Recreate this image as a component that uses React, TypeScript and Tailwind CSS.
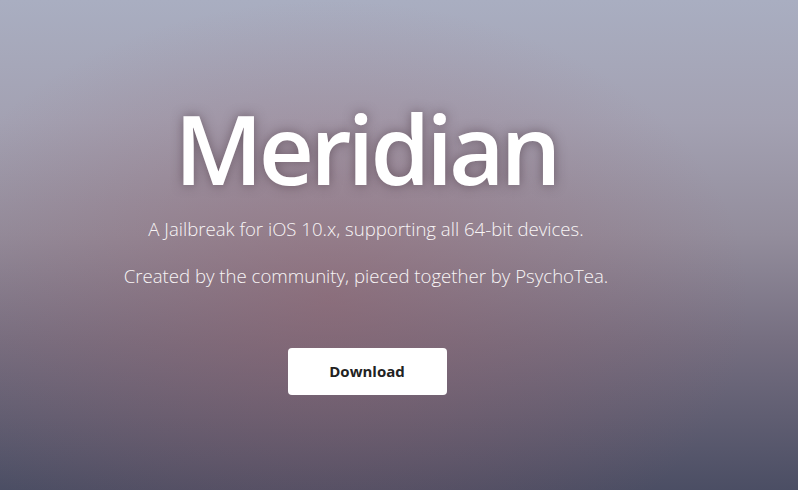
export default function App() {
  return (
    <main className="h-[490px] w-full overflow-hidden bg-[radial-gradient(ellipse_420px_300px_at_330px_300px,rgba(150,95,105,0.45),transparent),linear-gradient(180deg,#a9aec1_0%,#a3a1b2_25%,#938d9c_48%,#756e80_70%,#4b4e64_100%)] font-['Open_Sans',sans-serif]">
      <div className="flex flex-col items-center pr-[66px] pt-[100px] text-center">
        <h1 className="text-[96px] font-semibold leading-none tracking-[-4px] text-white [text-shadow:0_0_12px_rgba(60,40,50,0.5)]">
          Meridian
        </h1>
        <p className="mt-[21px] text-[18.6px] font-light leading-6 text-[#f8f5f6]">
          A Jailbreak for iOS 10.x, supporting all 64-bit devices.
        </p>
        <p className="mt-[23px] text-[18.6px] font-light leading-6 text-[#f8f5f6]">
          Created by the community, pieced together by PsychoTea.
        </p>
        <button className="mt-[60px] ml-[2px] h-[47px] w-[159px] rounded-[4px] bg-white text-[15px] font-bold text-[#222]">
          Download
        </button>
      </div>
    </main>
  );
}
